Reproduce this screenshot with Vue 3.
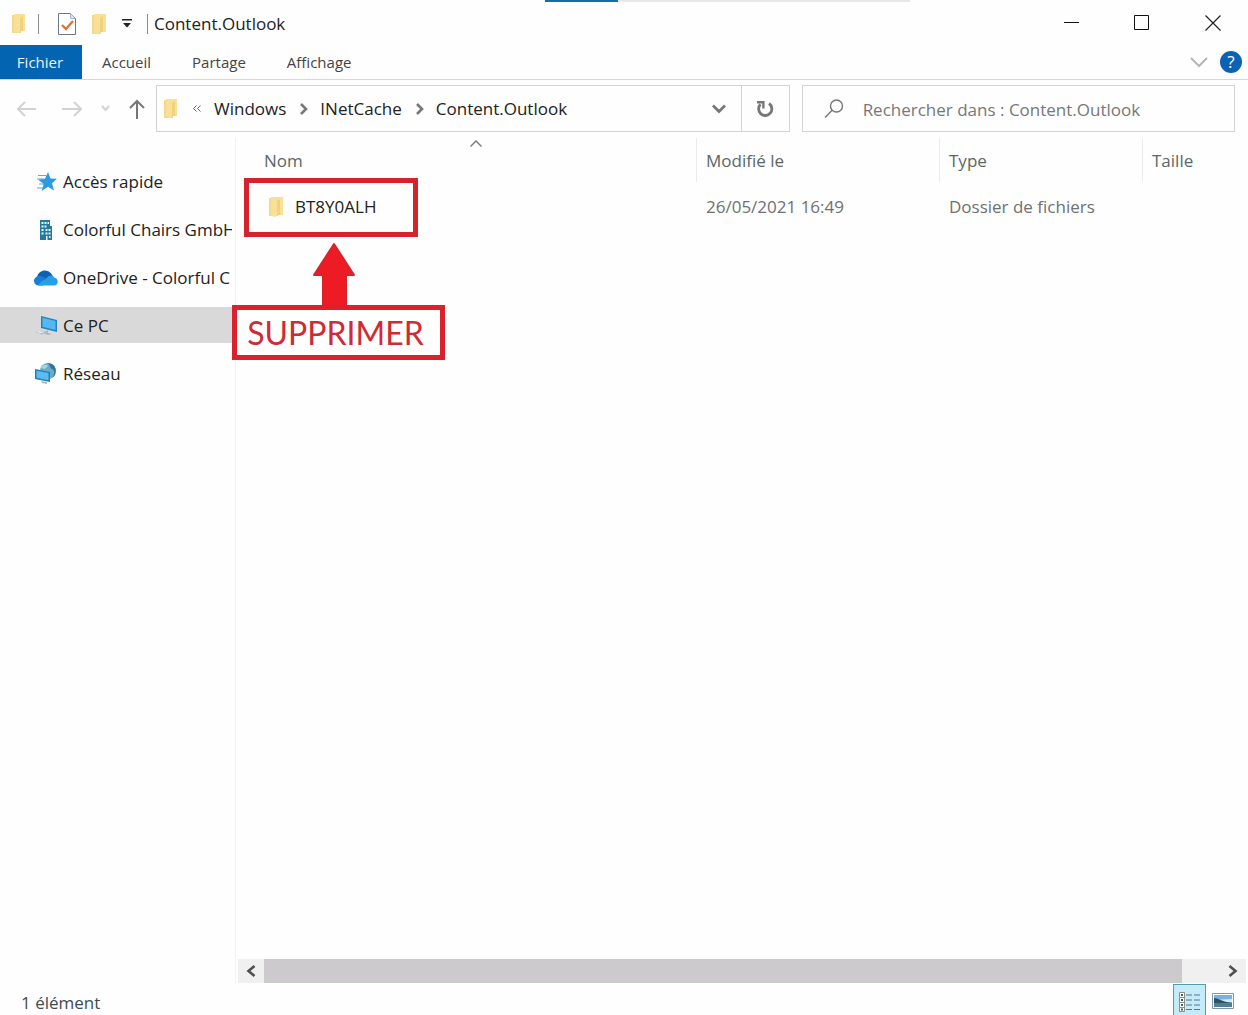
<script setup>
import { ref } from 'vue'

const tabs = ['Accueil', 'Partage', 'Affichage']
const crumbs = ['Windows', 'INetCache', 'Content.Outlook']
const places = [
  { id: 'quick', label: 'Accès rapide' },
  { id: 'company', label: 'Colorful Chairs GmbH' },
  { id: 'onedrive', label: 'OneDrive - Colorful C' },
  { id: 'pc', label: 'Ce PC' },
  { id: 'network', label: 'Réseau' },
]
const active = ref('pc')
const files = [{ name: 'BT8Y0ALH', modified: '26/05/2021 16:49', type: 'Dossier de fichiers', size: '' }]
const query = ref('')
</script>

<template>
  <div class="window">
    <header class="titlebar">
      <span class="progress"><span class="progress-done"></span></span>
      <div class="quickbar">
        <svg class="folder" viewBox="0 0 16 22"><path d="M1 2h9v18H1z" fill="#f3d98a" /><path d="M3 1h11v17H8v2l-5-1z" fill="#fae096" /><path d="M9 5l3-2v15H9z" fill="#efd27a" /></svg>
        <span class="bar"></span>
        <button class="bare" aria-label="Propriétés">
          <svg width="18" height="22" viewBox="0 0 18 22" fill="none"><path d="M.5.5h12l5 5v16H.5z" fill="#fff" stroke="#6e7784" /><path d="M12.500.5v5h5" stroke="#9eb3cf" fill="#dce8f5" /><path d="M4 12l4 4 7-8" stroke="#d9763f" stroke-width="2.400" /></svg>
        </button>
        <button class="bare" aria-label="Nouveau dossier">
          <svg class="folder" viewBox="0 0 16 22"><path d="M1 2h9v19H1z" fill="#f3d98a" /><path d="M3 1h12v18H8v2l-5-1z" fill="#fae096" /><path d="M9 5l3-2v16H9z" fill="#efd27a" /></svg>
        </button>
        <button class="bare" aria-label="Personnaliser">
          <svg width="10" height="9" viewBox="0 0 10 9"><path d="M0 0h10v1.500H0zM1 4h8L5 8.500z" fill="#222" /></svg>
        </button>
        <span class="bar"></span>
      </div>
      <h1>Content.Outlook</h1>
      <div class="controls">
        <button class="bare" aria-label="Réduire"><svg width="16" height="16" viewBox="0 0 16 16"><path d="M1 7.500h15" stroke="#111" /></svg></button>
        <button class="bare" aria-label="Agrandir"><svg width="16" height="16" viewBox="0 0 16 16"><path d="M.5.5h14v14H.5z" stroke="#111" fill="none" /></svg></button>
        <button class="bare" aria-label="Fermer"><svg width="16" height="16" viewBox="0 0 16 16"><path d="M.5.5l15 15m0-15l-15 15" stroke="#222" stroke-width="1.200" /></svg></button>
      </div>
    </header>

    <nav class="ribbon">
      <button class="file-tab">Fichier</button>
      <button v-for="t in tabs" :key="t" class="tab">{{ t }}</button>
      <button class="bare expand" aria-label="Développer le ruban"><svg width="18" height="11" viewBox="0 0 18 11" fill="none"><path d="M1 1l8 8 8-8" stroke="#b5b5b8" stroke-width="2" /></svg></button>
      <button class="help" aria-label="Aide">?</button>
    </nav>

    <div class="addressbar">
      <div class="history">
        <button class="bare" aria-label="Précédent"><svg width="20" height="16" viewBox="0 0 20 16" fill="none" stroke="#d2d2d4" stroke-width="2"><path d="M19 8H2M8 1L1 8l7 7" /></svg></button>
        <button class="bare" aria-label="Suivant"><svg width="20" height="16" viewBox="0 0 20 16" fill="none" stroke="#d2d2d4" stroke-width="2"><path d="M0 8h18M12 1l7 7-7 7" /></svg></button>
        <button class="bare" aria-label="Récents"><svg width="9" height="7" viewBox="0 0 9 7" fill="none" stroke="#d2d2d4" stroke-width="2"><path d="M1 1l3.500 4L8 1" /></svg></button>
        <button class="bare" aria-label="Dossier parent"><svg width="16" height="20" viewBox="0 0 16 20" fill="none" stroke="#77777a" stroke-width="2"><path d="M8 20V2M1 9l7-7 7 7" /></svg></button>
      </div>
      <div class="path">
        <svg class="folder" viewBox="0 0 16 22"><path d="M1 2h9v18H1z" fill="#f3d98a" /><path d="M3 1h11v17H8v2l-5-1z" fill="#fae096" /><path d="M9 5l3-2v15H9z" fill="#efd27a" /></svg>
        <svg class="more" width="8" height="7" viewBox="0 0 8 7" fill="none" stroke="#666"><path d="M3.500.5l-3 3 3 3M7.500.5l-3 3 3 3" /></svg>
        <template v-for="(c, i) in crumbs" :key="c">
          <svg v-if="i" class="sep" width="8" height="12" viewBox="0 0 8 12" fill="none" stroke="#77777a" stroke-width="2.600"><path d="M1 1l5 5-5 5" /></svg>
          <a href="#" @click.prevent>{{ c }}</a>
        </template>
        <button class="bare drop" aria-label="Emplacements précédents"><svg width="14" height="10" viewBox="0 0 14 10" fill="none" stroke="#77777a" stroke-width="2.800"><path d="M1 1.500l6 6 6-6" /></svg></button>
        <button class="refresh" aria-label="Actualiser"><svg width="18" height="18" viewBox="0 0 18 18" fill="none" stroke="#77777a" stroke-width="2.800"><path d="M13 3.500a6.600 6.600 0 1 1-8.500.8" /><path d="M1 2.200h6.400v6.200" stroke-width="2.400" /></svg></button>
      </div>
      <label class="search">
        <svg width="20" height="20" viewBox="0 0 20 20" fill="none" stroke="#77777a" stroke-width="1.400"><circle cx="12.500" cy="7" r="6" /><path d="M8.200 11.300L1 18.500" /></svg>
        <input v-model="query" type="text" aria-label="Rechercher" placeholder="Rechercher dans : Content.Outlook" />
      </label>
    </div>

    <div class="body">
      <aside class="sidebar">
        <a v-for="p in places" :key="p.id" href="#" class="place" :class="{ active: p.id === active }" @click.prevent="active = p.id">
          <svg v-if="p.id === 'quick'" width="24" height="20" viewBox="0 0 24 20"><path d="M14 0l2.600 6.600 6.400.2-5 4.400 2 7.300-6-3.800-6.300 4.300 2-7L4 7.500l7-.7z" fill="#2b9be0" /><path d="M4 3.500h8M3 7h7M5 12h5M3 16h6" stroke="#5aabdd" stroke-width="1.200" /></svg>
          <svg v-else-if="p.id === 'company'" width="24" height="20" viewBox="0 0 24 20"><path d="M6 0h10v6h2v14H6z" fill="#24799f" /><path d="M7.500 2h2v2h-2zm3 0h2v2h-2zm3 0h1.500v2h-1.500zM7.500 5.500h2v2h-2zm3 0h2v2h-2zM7.500 9h2v2h-2zm0 3.500h2v2h-2zM11.500 9h2v2h-2zm3 0h2v2h-2zm-3 3.500h2v2h-2zm3 0h2v2h-2zM12 16h1.500v4H12zm3 0h1.500v2H15z" fill="#e9f5fa" /></svg>
          <svg v-else-if="p.id === 'onedrive'" width="24" height="16" viewBox="0 0 24 16"><path d="M3 7C5 0 12-1 16 2.500c1.500 1 2 2 2.500 3.500L10 10z" fill="#0f5fb3" /><path d="M5 15.500C2 15.500 0 13.500 0 11s2.200-5 5.500-5S11 8 14 9.500l-5 6z" fill="#1480d4" /><path d="M4 15.300C6 12 9 10.500 12 9c2-4 7-4.500 8-1.500 5 .8 5 8 0 8H5z" fill="#279fe8" /></svg>
          <svg v-else-if="p.id === 'pc'" width="24" height="20" viewBox="0 0 24 20"><path d="M7 0l16 4v12L7 12z" fill="#2483bd" /><path d="M8.500 1.800l13 3.300v9l-13-3.300z" fill="#53b9f5" /><path d="M14 14v3l4 1-4 1-5-2" fill="#a6b6c2" /><path d="M1 16l6-2 7 2-6 2.500z" fill="#b5bdc4" /><path d="M3 16l5-1.300M5 17l5-1.300" stroke="#eef2f4" /></svg>
          <svg v-else width="24" height="22" viewBox="0 0 24 22"><circle cx="14" cy="8" r="8" fill="#6aacc9" /><path d="M13 0c4 2 2 5 5 6s3 5 0 9c5-3 5-11 0-14z" fill="#2e789f" /><path d="M7 5c2-4 5-4 7-2l-3 3z" fill="#a7d5e5" /><path d="M1 6l15 3v10L1 16z" fill="#237fb4" /><path d="M2.500 7.700L14.500 10v7.200l-12-2.500z" fill="#58bdf3" /><path d="M7 18l6 1v2l-5-1z" fill="#a9b7bf" /></svg>
          <span>{{ p.label }}</span>
        </a>
      </aside>

      <main class="content">
        <svg class="sort" width="12" height="7" viewBox="0 0 12 7" fill="none" stroke="#77777a" stroke-width="1.400"><path d="M.5 6.500L6 1l5.500 5.500" /></svg>
        <table>
          <colgroup><col class="c-name" /><col class="c-date" /><col class="c-type" /><col /></colgroup>
          <thead>
            <tr><th>Nom</th><th>Modifié le</th><th>Type</th><th>Taille</th></tr>
          </thead>
          <tbody>
            <tr v-for="f in files" :key="f.name">
              <td>
                <div class="name">
                  <svg class="folder" viewBox="0 0 16 22"><path d="M1 2h9v18H1z" fill="#f3d98a" /><path d="M3 1h12v18H8v2l-5-1z" fill="#fae096" /><path d="M9 5l3-2v16H9z" fill="#efd27a" /></svg>
                  {{ f.name }}
                </div>
              </td>
              <td>{{ f.modified }}</td>
              <td>{{ f.type }}</td>
              <td>{{ f.size }}</td>
            </tr>
          </tbody>
        </table>

        <div class="highlight"></div>
        <svg class="arrow" width="42" height="64" viewBox="0 0 42 64"><path d="M21 2L41 33H33V64H10V33H1z" fill="#ed1c24" stroke="#d9222a" stroke-width="2" stroke-linejoin="round" /></svg>
        <div class="callout">SUPPRIMER</div>

        <div class="scrollbar">
          <button class="bare" aria-label="Défiler à gauche"><svg width="10" height="12" viewBox="0 0 10 12" fill="none" stroke="#4f4f52" stroke-width="2.600"><path d="M8.500 1l-6 5 6 5" /></svg></button>
          <div class="track"><div class="thumb"></div></div>
          <button class="bare" aria-label="Défiler à droite"><svg width="10" height="12" viewBox="0 0 10 12" fill="none" stroke="#4f4f52" stroke-width="2.600"><path d="M1.500 1l6 5-6 5" /></svg></button>
        </div>
      </main>
    </div>

    <footer class="status">
      <span>1 élément</span>
      <div class="views">
        <button class="view on" aria-label="Détails">
          <svg width="22" height="20" viewBox="0 0 22 20" fill="none"><path d="M.5.5h5v19h-5zM.5 5.500h5M.5 10.500h5M.5 15.500h5" fill="#fff" stroke="#8b8f86" /><path d="M2 3h2M2 8h2M2 13h2M2 17.500h2" stroke="#49604a" stroke-width="2" /><path d="M7 3h15M7 8h15M7 13h15M7 17.500h15" stroke="#5b7585" stroke-dasharray="6 2" /></svg>
        </button>
        <button class="view" aria-label="Grandes icônes">
          <svg width="22" height="16" viewBox="0 0 22 16"><path d="M.5.5h21v15H.5z" fill="#fff" stroke="#7c97ab" /><path d="M2 2h18v12H2z" fill="#77b3e2" /><path d="M2 7l18-1v3H2z" fill="#d6eaf3" /><path d="M2 5c4 0 6 3 18 5v1H2z" fill="#2e5360" /><path d="M2 10h18v4H2z" fill="#517d98" /></svg>
        </button>
      </div>
    </footer>
  </div>
</template>

<style>
body { margin: 0; }
</style>

<style scoped>
* { box-sizing: border-box; }
.window { display: flex; flex-direction: column; min-height: 100vh; overflow: hidden; background: #fdfefd; color: #222; font: 17px/24px "Open Sans", "Noto Sans", sans-serif; }
svg { display: block; flex: none; }
button { font: inherit; border: 0; padding: 0; cursor: default; }
a { color: inherit; text-decoration: none; }
.bare { background: none; display: flex; align-items: center; justify-content: center; }
.folder { width: 16px; height: 22px; }

.titlebar { position: relative; display: flex; align-items: center; height: 45px; padding-left: 11px; }
.progress { position: absolute; top: 0; left: 545px; width: 365px; height: 2px; background: #e8e8e6; }
.progress-done { display: block; width: 20%; height: 2px; background: #146fa8; }
.quickbar { display: flex; align-items: center; gap: 15px; padding-top: 2px; }
.quickbar .bar { width: 1px; height: 20px; background: #8c8c8c; }
.quickbar .bar:nth-child(2) { margin: 0 4px 0 -4px; }
h1 { margin: 2px 0 0 6px; font-size: 17px; line-height: 24px; font-weight: 400; }
.controls { display: flex; gap: 55px; margin-left: auto; padding-right: 27px; }

.ribbon { display: flex; align-items: center; height: 35px; border-bottom: 1px solid #d5d8d6; font-size: 15px; color: #444; }
.file-tab { align-self: stretch; width: 82px; padding-right: 2px; background: #0364b2; color: #e9f3fb; }
.tab { background: none; color: #444; margin-left: 20px; padding-right: 21px; }
.expand { margin-left: auto; }
.help { width: 22px; height: 22px; margin: 0 6px 0 12px; border-radius: 50%; background: #0b62b4; color: #fff; font-size: 17px; line-height: 22px; }

.addressbar { display: flex; height: 58px; padding: 5px 13px 6px 17px; }
.history { display: flex; align-items: center; width: 139px; gap: 19px; }
.history .bare:first-child { margin-right: 6px; }
.path { display: flex; align-items: center; flex: 634 1 0; min-width: 0; border: 1px solid #d5d3d6; margin-right: 12px; }
.path .folder { margin-left: 6px; }
.more { margin: 0 13px 0 14px; }
.sep { margin: 0 12px 0 14px; }
.drop { margin-left: auto; padding: 0 15px; }
.refresh { display: flex; align-items: center; justify-content: center; align-self: stretch; width: 48px; background: none; border-left: 1px solid #d5d3d6; }
.search { display: flex; align-items: center; flex: 433 1 0; min-width: 0; gap: 19px; border: 1px solid #d5d3d6; }
.search svg { margin-left: 21px; }
.search input { flex: 1; min-width: 0; border: 0; padding: 2px 0 0; outline: 0; background: none; font: inherit; color: #222; }
.search input::placeholder { color: #77777a; opacity: 1; }

.body { display: flex; flex: 1; }
.sidebar { display: flex; flex-direction: column; gap: 12px; flex: none; width: 236px; padding: 25px 3px 0 0; border-right: 1px solid #f3f1f3; }
.place { display: flex; align-items: center; gap: 5px; height: 36px; padding: 2px 0 0 34px; overflow: hidden; white-space: nowrap; }
.place span { overflow: hidden; }
.place.active { background: #d9d9da; }

.content { position: relative; display: flex; flex-direction: column; flex: 1; min-width: 0; }
.sort { position: absolute; left: 234px; top: 2px; }
table { width: 100%; table-layout: fixed; border-collapse: separate; border-spacing: 0; color: #6f7072; }
.c-name { width: 461px; }
.c-date { width: 243px; }
.c-type { width: 203px; }
th, td { padding: 2px 0 0 9px; text-align: left; white-space: nowrap; }
th { height: 44px; font-weight: 400; color: #5c6668; border-right: 1px solid #eceaec; }
th:last-child { border-right: 0; }
th:first-child, td:first-child { padding-left: 28px; }
td { height: 48px; }
.name { display: flex; align-items: center; gap: 11px; padding-left: 4px; color: #222; }

.highlight { position: absolute; left: 8px; top: 40px; width: 174px; height: 59px; border: 5px solid #d4232d; }
.arrow { position: absolute; left: 77px; top: 104px; }
.callout { position: absolute; left: -4px; top: 167px; width: 213px; height: 55px; padding-right: 6px; border: 5px solid #d9222c; background: #fff; color: #cf2a35; font: 32px/45px Lato, "Open Sans", sans-serif; text-align: center; }

.scrollbar { display: flex; height: 24px; margin: auto 2px 1px 2px; background: #f1f0f1; }
.scrollbar .bare { width: 26px; }
.track { flex: 1; }
.thumb { width: 96%; height: 24px; background: #cccacd; }

.status { display: flex; justify-content: space-between; height: 31px; padding: 0 9px 0 21px; color: #3d4c50; }
.status > span { line-height: 38px; }
.views { display: flex; }
.view { display: flex; align-items: center; justify-content: center; width: 33px; height: 31px; padding-top: 3px; background: none; }
.view.on { border: 1px solid #5c9aab; border-bottom: 0; background: #c4ebf8; }
</style>
